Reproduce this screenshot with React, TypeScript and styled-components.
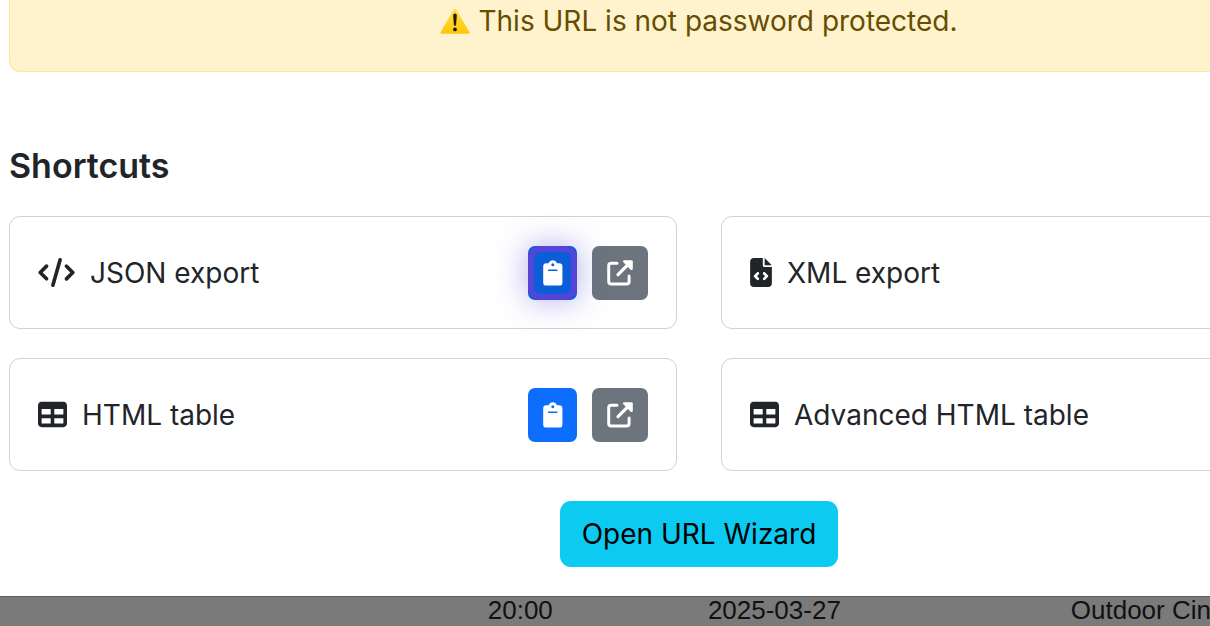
import React from "react";
import styled, { createGlobalStyle, css } from "styled-components";
import { FaCode, FaFileCode, FaTable } from "react-icons/fa6";

const GlobalStyle = createGlobalStyle`
  *, *::before, *::after { box-sizing: border-box; }
  body {
    margin: 0;
    background: #ffffff;
    color: #212529;
    font-family: Inter, "Noto Sans", sans-serif;
    font-size: 28px;
    line-height: 42px;
  }
`;

const Page = styled.div`
  overflow: hidden;
`;

const ModalBody = styled.main`
  margin: 0 -179px 0 9px;
  padding-bottom: 29px;
`;

const Alert = styled.div`
  display: flex;
  align-items: center;
  justify-content: center;
  gap: 8px;
  padding-bottom: 29px;
  border: 1px solid #ffe69c;
  border-top: 0;
  border-radius: 0 0 11px 11px;
  background: #fff3cd;
  color: #664d03;
`;

const Heading = styled.h2`
  margin: 73px 0 29px;
  font-size: 34px;
  font-weight: 600;
  line-height: 42px;
`;

const CardGrid = styled.div`
  display: grid;
  grid-template-columns: 1fr 1fr;
  gap: 29px 44px;
`;

const Card = styled.section`
  display: flex;
  align-items: center;
  justify-content: space-between;
  min-height: 113px;
  padding: 28px;
  border: 1px solid #d0d1d2;
  border-radius: 11px;
`;

const CardLabel = styled.div<{ $iconWidth: number }>`
  display: flex;
  align-items: center;
  gap: 15px;

  svg {
    height: 29px;
    width: ${({ $iconWidth }) => $iconWidth}px;
  }
`;

const Actions = styled.div`
  display: flex;
  gap: 15px;
`;

const buttonShape = css`
  display: flex;
  align-items: center;
  justify-content: center;
  height: 54px;
  padding: 0;
  border: 0;
  border-radius: 7px;
  color: #ffffff;
`;

const CopyButton = styled.button<{ $active?: boolean }>`
  ${buttonShape}
  width: 49px;
  background: #0d6efd;
  ${({ $active }) =>
    $active &&
    css`
      position: relative;
      background: #0b5ed7;
      box-shadow: 0 0 32px rgba(83, 69, 216, 0.45);

      &::after {
        content: "";
        position: absolute;
        inset: 0;
        border: 6px solid #5345d8;
        border-radius: 12px;
      }
    `}
`;

const OpenLink = styled.a`
  ${buttonShape}
  width: 56px;
  background: #6c757d;
`;

const WizardRow = styled.div`
  display: flex;
  justify-content: center;
  margin-top: 30px;
`;

const WizardButton = styled.button`
  height: 66px;
  padding: 0 22px;
  border: 0;
  border-radius: 11px;
  background: #0dcaf0;
  color: #000000;
  font: inherit;
`;

const Schedule = styled.table`
  width: 100%;
  table-layout: fixed;
  border-collapse: collapse;
  border-top: 1px solid #606060;
  background: #7a7a7a;
  color: #111111;
  font-family: "Liberation Sans", Arial, sans-serif;
  font-size: 26px;
  line-height: 26px;
  white-space: nowrap;
`;

const Cell = styled.td<{ $width: string; $align?: string }>`
  width: ${({ $width }) => $width};
  padding: 0 6px 4px;
  text-align: ${({ $align }) => $align ?? "center"};
`;

const WarningIcon = () => (
  <svg width="30" height="27" viewBox="0 0 30 27" aria-hidden="true">
    <defs>
      <linearGradient id="warning" x1="0" y1="0" x2="0" y2="1">
        <stop offset="0" stopColor="#ffdf43" />
        <stop offset="1" stopColor="#ffc60b" />
      </linearGradient>
    </defs>
    <path
      d="M13.8 1.4a1.4 1.4 0 0 1 2.4 0L29.4 24a1.2 1.2 0 0 1-1 1.8H1.6a1.2 1.2 0 0 1-1-1.8Z"
      fill="url(#warning)"
    />
    <path
      d="M13.2 7.4a1.8 1.8 0 0 1 3.6 0l-.7 9.3a1.1 1.1 0 0 1-2.2 0Z"
      fill="#211a05"
    />
    <circle cx="15" cy="21.4" r="1.9" fill="#211a05" />
  </svg>
);

const ClipboardIcon = () => (
  <svg width="20" height="26" viewBox="0 0 20 26" aria-hidden="true">
    <path
      fill="currentColor"
      fillRule="evenodd"
      d="M3.4 3.2h2.2C6.3 1.4 7.9.2 9.8.2s3.500 1.200 4.200 3h2.200a3.200 3.200 0 0 1 3.200 3.200v16a3.200 3.200 0 0 1-3.200 3.200H3.400a3.200 3.200 0 0 1-3.200-3.200v-16a3.200 3.200 0 0 1 3.200-3.200ZM9.800 3.200a1.500 1.500 0 1 0 0 3 1.500 1.500 0 0 0 0-3ZM5.600 9.500a.7.7 0 0 0 0 1.400h8.400a.7.7 0 0 0 0-1.400Z"
    />
  </svg>
);

const ExternalIcon = () => (
  <svg width="26" height="26" viewBox="0 0 26 26" fill="none" aria-hidden="true">
    <path
      d="M10 3.300H4.200a2.500 2.500 0 0 0-2.500 2.500v15.600a2.500 2.500 0 0 0 2.500 2.500h15.400a2.500 2.500 0 0 0 2.500-2.500V16"
      stroke="currentColor"
      strokeWidth="3"
      strokeLinecap="round"
    />
    <path d="M11 14.700 21 4.700" stroke="currentColor" strokeWidth="3.200" strokeLinecap="round" />
    <path
      d="M17.200.2h7.200A1.400 1.400 0 0 1 25.800 1.600v7.200c0 1.100-1.300 1.600-2.100.9L16.300 2.300c-.8-.8-.2-2.100.9-2.100Z"
      fill="currentColor"
    />
  </svg>
);

const shortcuts = [
  { name: "JSON export", Icon: FaCode, iconWidth: 37, active: true },
  { name: "XML export", Icon: FaFileCode, iconWidth: 22 },
  { name: "HTML table", Icon: FaTable, iconWidth: 29 },
  { name: "Advanced HTML table", Icon: FaTable, iconWidth: 29 },
];

export default function App() {
  return (
    <Page>
      <GlobalStyle />
      <ModalBody>
        <Alert role="alert">
          <WarningIcon />
          <span>This URL is not password protected.</span>
        </Alert>
        <Heading>Shortcuts</Heading>
        <CardGrid>
          {shortcuts.map(({ name, Icon, iconWidth, active }) => (
            <Card key={name}>
              <CardLabel $iconWidth={iconWidth}>
                <Icon aria-hidden="true" />
                <span>{name}</span>
              </CardLabel>
              <Actions>
                <CopyButton type="button" $active={active} aria-label={`Copy ${name} URL`}>
                  <ClipboardIcon />
                </CopyButton>
                <OpenLink href="#" aria-label={`Open ${name}`}>
                  <ExternalIcon />
                </OpenLink>
              </Actions>
            </Card>
          ))}
        </CardGrid>
        <WizardRow>
          <WizardButton type="button">Open URL Wizard</WizardButton>
        </WizardRow>
      </ModalBody>
      <Schedule>
        <tbody>
          <tr>
            <Cell $width="32%" />
            <Cell $width="22%">20:00</Cell>
            <Cell $width="20%">2025-03-27</Cell>
            <Cell $width="14%" />
            <Cell $width="12%" $align="left">Outdoor Cin</Cell>
          </tr>
        </tbody>
      </Schedule>
    </Page>
  );
}
